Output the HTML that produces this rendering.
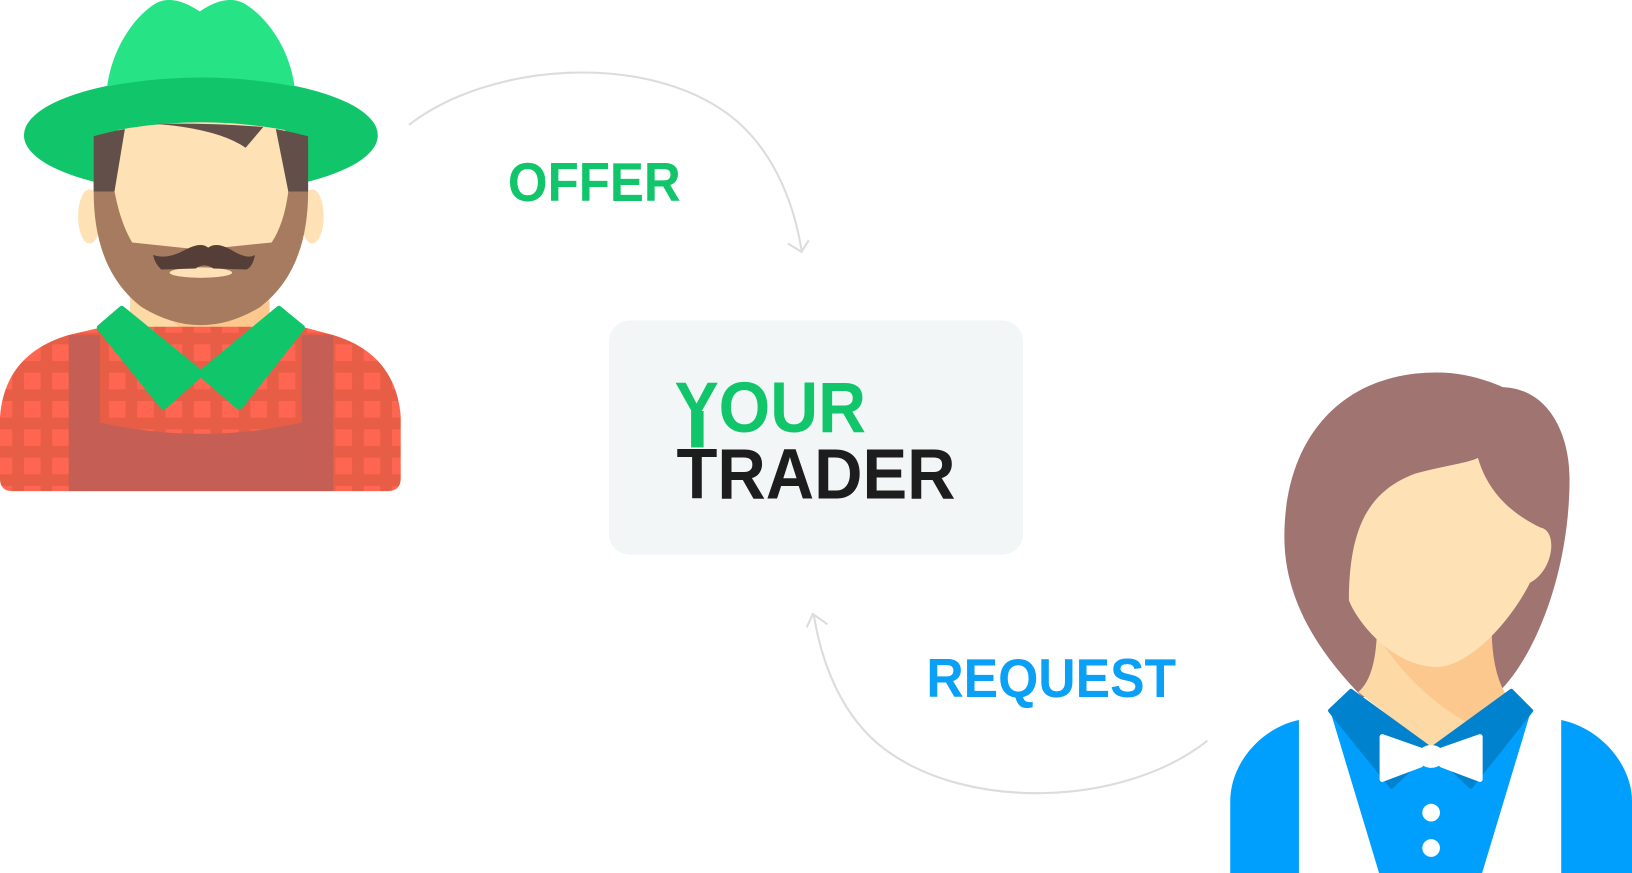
<!DOCTYPE html>
<html><head><meta charset="utf-8"><style>
html,body{margin:0;padding:0;background:#fff;width:1632px;height:873px;overflow:hidden}
svg{display:block}
text{font-family:"Liberation Sans",Arial,sans-serif;font-weight:bold}
</style></head><body>
<svg width="1632" height="873" viewBox="0 0 1568 839" preserveAspectRatio="none">
<defs>
<pattern id="chk" patternUnits="userSpaceOnUse" x="23" y="331" width="27.2" height="27.2">
<rect width="27.2" height="27.2" fill="#e85d45"/><rect width="16" height="16" fill="#ff6651"/>
</pattern>
</defs>

<!-- arrows -->
<path d="M393,120 C470,60 620,50 700,110 C740,140 762,190 770,240" fill="none" stroke="#dcdcdc" stroke-width="2"/>
<path d="M757,234 L770,242 L777,231" fill="none" stroke="#dcdcdc" stroke-width="2"/>
<path d="M1160,712 C1080,775 930,780 850,720 C810,690 790,640 782,592" fill="none" stroke="#dcdcdc" stroke-width="2"/>
<path d="M775,603 L781,590 L795,600" fill="none" stroke="#dcdcdc" stroke-width="2"/>

<text x="488" y="193" font-size="53" fill="#11c56b" textLength="166" lengthAdjust="spacingAndGlyphs">OFFER</text>
<text x="890" y="670" font-size="53" fill="#0aa0f5" textLength="240" lengthAdjust="spacingAndGlyphs">REQUEST</text>

<!-- center box -->
<rect x="585" y="308" width="398" height="225" rx="20" fill="#f2f6f7"/>
<rect x="664" y="395" width="12" height="35" fill="#11c56b"/>
<text x="648" y="415" font-size="69" fill="#11c56b" textLength="184" lengthAdjust="spacingAndGlyphs">YOUR</text>
<text x="650" y="479" font-size="69" fill="#1d1d1d" textLength="268" lengthAdjust="spacingAndGlyphs">TRADER</text>

<!-- MAN -->
<ellipse cx="86" cy="208" rx="11" ry="26" fill="#fee1b4"/>
<ellipse cx="300" cy="208" rx="11" ry="26" fill="#fee1b4"/>
<ellipse cx="193" cy="130" rx="170" ry="56" fill="#11c56b"/>
<path d="M103,83 C108,45 130,15 150,3 C162,-3 175,0 192,11 C208,0 222,-3 234,3 C255,15 278,45 283,83 Q193,66 103,83Z" fill="#26e385"/>
<rect x="125" y="260" width="134" height="85" fill="#fcd9a5"/>
<path d="M150,290 L259,290 L259,340 L215,340 Q170,320 150,290Z" fill="#fcc88e"/>
<path d="M0,472 L0,400 Q5,340 66,322 L100,314 L290,314 L320,322 Q380,340 385,400 L385,460 Q385,472 372,472 L12,472 Q0,472 0,460Z" fill="url(#chk)"/>
<rect x="66" y="322" width="30" height="150" fill="#c55f55"/>
<rect x="290" y="322" width="30" height="150" fill="#c55f55"/>
<path d="M96,406 Q193,428 290,406 L290,472 L96,472Z" fill="#c55f55"/>
<path d="M96,315 L117,297 L193,359 L157,391Z" fill="#11c56b" stroke="#11c56b" stroke-width="6" stroke-linejoin="round"/>
<path d="M290,315 L268,297 L193,359 L230,391Z" fill="#11c56b" stroke="#11c56b" stroke-width="6" stroke-linejoin="round"/>
<path d="M90,131 Q193,106 296,131 L296,184 Q296,260 250,295 Q193,330 136,295 Q90,260 90,184Z" fill="#a67b5f"/>
<path d="M110,184 L113,125 Q193,110 274,125 L277,184 Q273,215 261,233 L193,240 L127,233 Q116,215 110,184Z" fill="#fee1b4"/>
<path d="M90,131 Q104,127 120,124 L110,184 L90,184Z" fill="#634f4a"/>
<path d="M265,124 Q281,127 296,131 L296,184 L277,184Z" fill="#634f4a"/>
<path d="M150,119 Q200,118 253,122 L236,142 Q210,124 150,119Z" fill="#634f4a"/>
<ellipse cx="193" cy="262" rx="30" ry="5" fill="#fee1b4"/>
<path d="M147,245 Q160,250 178,240 Q193,232 200,238 Q208,232 222,240 Q238,250 245,245 Q243,256 237,259 L205,258 Q196,252 188,258 L155,259 Q149,254 147,245Z" fill="#553e38"/>

<!-- WOMAN -->
<path d="M1309,670 C1260,620 1234,570 1234,516 C1234,420 1290,358 1380,358 C1405,358 1425,364 1444,372 C1490,374 1508,420 1508,460 C1508,550 1475,630 1441,664 Z" fill="#a07470"/>
<path d="M1323,600 L1433,600 Q1433,650 1445,665 L1375,720 L1305,665 Q1323,650 1323,600Z" fill="#fcd9a5"/>
<path d="M1323,610 Q1360,670 1420,700 L1450,672 Q1433,650 1433,600Z" fill="#fcc88e"/>
<path d="M1296,577 C1296,500 1320,470 1360,455 C1390,447 1410,445 1420,440 C1430,475 1455,495 1480,507 C1497,510 1493,548 1470,560 C1450,600 1410,641 1380,641 C1340,641 1305,600 1296,577Z" fill="#fee1b4"/>
<path d="M1182,839 L1182,770 C1182,735 1210,700 1248,692 L1248,839Z" fill="#009ffd"/>
<path d="M1500,692 C1538,700 1568,735 1568,770 L1568,839 L1500,839Z" fill="#009ffd"/>
<path d="M1278,683 L1298,664 L1375,720 L1452,664 L1471,683 L1424,839 L1325,839Z" fill="#009ffd"/>
<path d="M1278,683 L1298,664 L1375,720 L1337,756Z" fill="#0082cf" stroke="#0082cf" stroke-width="4" stroke-linejoin="round"/>
<path d="M1471,683 L1452,664 L1375,720 L1413,756Z" fill="#0082cf" stroke="#0082cf" stroke-width="4" stroke-linejoin="round"/>
<path d="M1328,708 L1365,721 L1365,735 L1328,749Z" fill="#fff" stroke="#fff" stroke-width="5" stroke-linejoin="round"/>
<path d="M1422,708 L1385,721 L1385,735 L1422,749Z" fill="#fff" stroke="#fff" stroke-width="5" stroke-linejoin="round"/>
<ellipse cx="1375" cy="727" rx="13" ry="11" fill="#fff"/>
<circle cx="1375" cy="781" r="8.5" fill="#fff"/>
<circle cx="1375" cy="815" r="8.5" fill="#fff"/>
</svg>
</body></html>
